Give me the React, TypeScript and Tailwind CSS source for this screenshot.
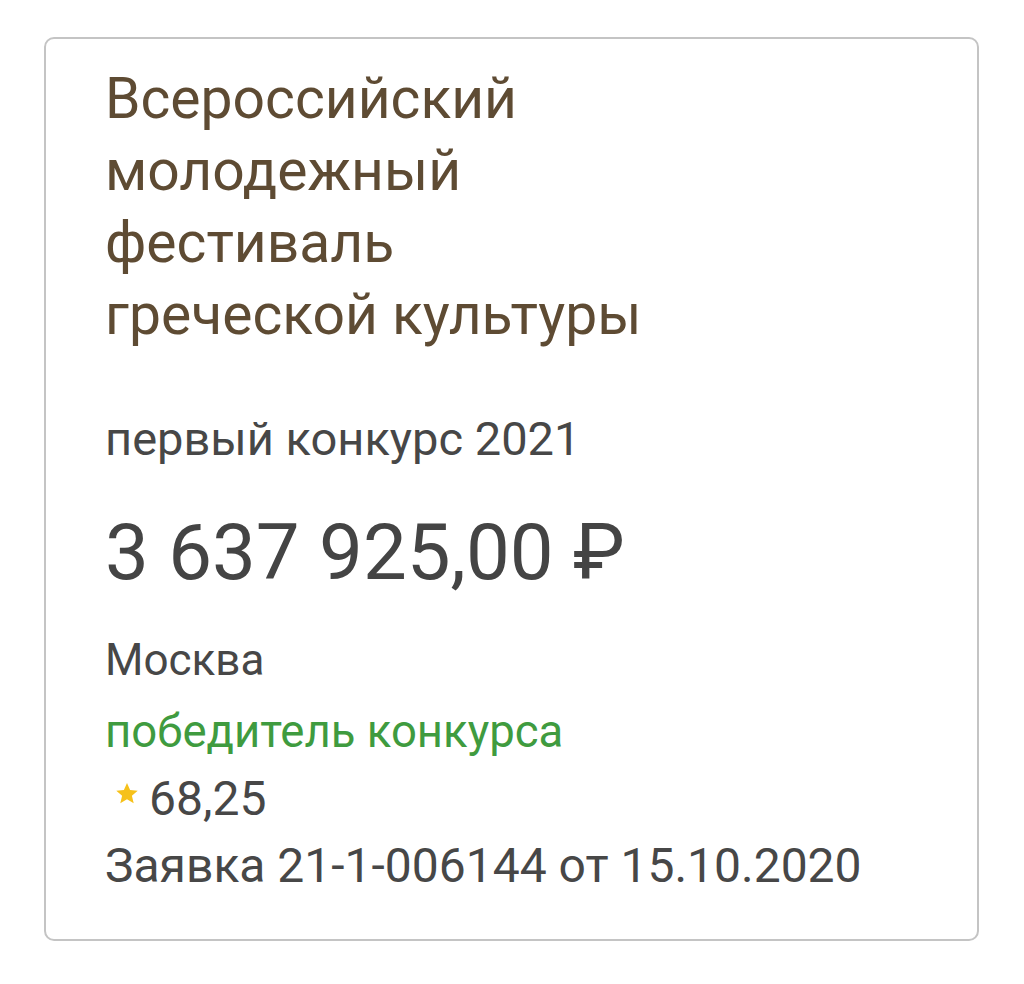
import React from "react";

export default function App() {
  return (
    <div className="w-[1024px] h-[984px] bg-white pt-[37px] pl-[44px]" style={{ fontFamily: "Roboto, 'Noto Sans', sans-serif" }}>
      <div className="w-[935px] h-[904px] border-2 border-[#c4c4c4] rounded-[10px] pl-[59px] pt-[24px]">
        <div className="text-[57px] leading-[72px] text-[#5e4b33]">
          <div>Всероссийский</div>
          <div>молодежный</div>
          <div>фестиваль</div>
          <div>греческой культуры</div>
        </div>
        <div className="mt-[60px] text-[47px] leading-[56px] text-[#474747]">первый конкурс 2021</div>
        <div className="mt-[41px] text-[78px] leading-[90px] text-[#444444]">3 637 925,00 ₽</div>
        <div className="mt-[32px] text-[44px] leading-[60px] text-[#474747]">Москва</div>
        <div className="mt-[12px] text-[45.5px] leading-[60px] text-[#3f9b3f]">победитель конкурса</div>
        <div className="mt-[7px] flex items-start text-[48px] leading-[60px] text-[#474747]">
          <svg width="24" height="24" viewBox="0 0 24 24" className="shrink-0 block w-[24px] h-[24px] ml-[10px] mr-[10px] mt-[13px]">
            <path d="M12 1l3.1 7.1 7.6.6-5.8 5 1.8 7.5L12 17.3l-6.7 3.9 1.8-7.5-5.8-5 7.6-.6z" fill="#f6c11a" />
          </svg>
          <span>68,25</span>
        </div>
        <div className="mt-[7px] text-[48px] leading-[60px] text-[#474747]">Заявка 21-1-006144 от 15.10.2020</div>
      </div>
    </div>
  );
}
